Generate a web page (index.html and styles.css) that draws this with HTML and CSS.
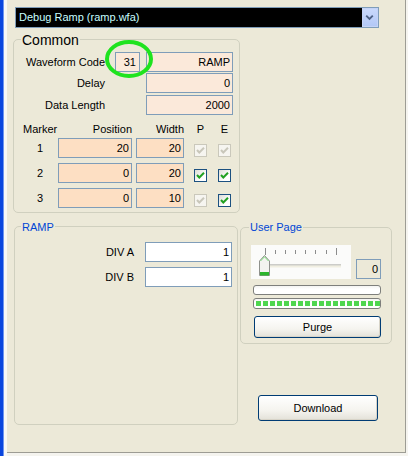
FILE: index.html
```html
<!DOCTYPE html>
<html>
<head>
<meta charset="utf-8">
<link rel="stylesheet" href="styles.css">
</head>
<body>
<div class="frame">
  <div class="edge"></div>
  <div class="panel">
    <div class="combo">
      <span class="combo-text">Debug Ramp (ramp.wfa)</span>
      <span class="combo-btn"><svg width="16" height="19" viewBox="0 0 16 19"><path d="M4.5 7.5 L8 11 L11.5 7.5" fill="none" stroke="#4d6185" stroke-width="2"/></svg></span>
    </div>

    <div class="group common">
      <span class="legend legend-big">Common</span>
      <div class="frow">
        <span class="lbl">Waveform Code</span>
        <span class="tb ro code">31</span>
        <span class="tb ro wide gap6">RAMP</span>
      </div>
      <div class="frow mt1">
        <span class="lbl">Delay</span>
        <span class="tb ro wide gap41">0</span>
      </div>
      <div class="frow mt2">
        <span class="lbl">Data Length</span>
        <span class="tb ro wide gap41">2000</span>
      </div>

      <div class="mhead">
        <span class="mnum mhd">Marker</span>
        <span class="mpos hr">Position</span>
        <span class="mwid hr">Width</span>
        <span class="mchk hc">P</span>
        <span class="mchk2 hc">E</span>
      </div>
      <div class="mrow first">
        <span class="mnum">1</span>
        <span class="tb mk mpos">20</span>
        <span class="tb mk mwid">20</span>
        <span class="cb off mchk"><svg width="13" height="13" viewBox="0 0 13 13"><path d="M3 6 L5.3 8.5 L10 3.8" fill="none" stroke="#c9c7ba" stroke-width="2"/></svg></span>
        <span class="cb off mchk2"><svg width="13" height="13" viewBox="0 0 13 13"><path d="M3 6 L5.3 8.5 L10 3.8" fill="none" stroke="#c9c7ba" stroke-width="2"/></svg></span>
      </div>
      <div class="mrow">
        <span class="mnum">2</span>
        <span class="tb mk mpos">0</span>
        <span class="tb mk mwid">20</span>
        <span class="cb on mchk"><svg width="11" height="11" viewBox="0 0 11 11"><path d="M2 5 L4.3 7.5 L9 2.8" fill="none" stroke="#21a121" stroke-width="2"/></svg></span>
        <span class="cb on mchk2"><svg width="11" height="11" viewBox="0 0 11 11"><path d="M2 5 L4.3 7.5 L9 2.8" fill="none" stroke="#21a121" stroke-width="2"/></svg></span>
      </div>
      <div class="mrow">
        <span class="mnum">3</span>
        <span class="tb mk mpos">0</span>
        <span class="tb mk mwid">10</span>
        <span class="cb off mchk"><svg width="13" height="13" viewBox="0 0 13 13"><path d="M3 6 L5.3 8.5 L10 3.8" fill="none" stroke="#c9c7ba" stroke-width="2"/></svg></span>
        <span class="cb on mchk2"><svg width="11" height="11" viewBox="0 0 11 11"><path d="M2 5 L4.3 7.5 L9 2.8" fill="none" stroke="#21a121" stroke-width="2"/></svg></span>
      </div>
    </div>

    <div class="lower">
      <div class="group ramp">
        <span class="legend legend-blue">RAMP</span>
        <div class="drow">
          <span class="dlbl">DIV A</span>
          <span class="tb wide white">1</span>
        </div>
        <div class="drow mt5">
          <span class="dlbl">DIV B</span>
          <span class="tb wide white">1</span>
        </div>
      </div>

      <div class="rightcol">
        <div class="group user">
          <span class="legend legend-blue lu">User Page</span>
          <div class="srow">
            <div class="slider">
              <svg width="100" height="34" viewBox="0 0 100 34">
                <g stroke="#8c8c8c" stroke-width="1">
                  <line x1="14.5" y1="3" x2="14.5" y2="10"/>
                  <line x1="24.5" y1="5" x2="24.5" y2="9"/>
                  <line x1="34.5" y1="5" x2="34.5" y2="9"/>
                  <line x1="44.5" y1="5" x2="44.5" y2="9"/>
                  <line x1="54.5" y1="5" x2="54.5" y2="9"/>
                  <line x1="64.5" y1="5" x2="64.5" y2="9"/>
                  <line x1="75.5" y1="5" x2="75.5" y2="9"/>
                  <line x1="85.5" y1="3" x2="85.5" y2="10"/>
                </g>
                <rect x="17" y="19.5" width="73" height="1" fill="#9d9d98"/>
                <rect x="17" y="20.5" width="73" height="2" fill="#f1efe2"/>
                <path d="M8.5 16 L13.5 10.5 L18.5 16 L18.5 30.5 L8.5 30.5 Z" fill="#f3f3ef" stroke="#8f918c" stroke-width="1"/>
                <path d="M9.5 16 L13.5 11.8 L17.5 16" fill="none" stroke="#7bd97b" stroke-width="1"/>
                <rect x="9" y="27" width="9" height="3.5" fill="#2cb52c"/>
              </svg>
            </div>
            <span class="tb val">0</span>
          </div>
          <div class="pbar p1"></div>
          <div class="pbar p2"><div class="dash"></div></div>
          <button class="btn purge">Purge</button>
        </div>
        <button class="btn download">Download</button>
      </div>
    </div>
  </div>
  <svg class="circle" width="52" height="42" viewBox="0 0 52 42"><ellipse cx="26" cy="20" rx="22" ry="17" fill="none" stroke="#1fe31f" stroke-width="4"/></svg>
</div>
</body>
</html>
```

FILE: styles.css
```css
* { box-sizing: border-box; }
html, body { margin: 0; padding: 0; }
body {
  background: #f5f4ef;
  font-family: "Liberation Sans", Arial, sans-serif;
  font-size: 11px;
  color: #000;
}
.frame {
  position: relative;
  display: flex;
  width: 408px;
  height: 456px;
  overflow: hidden;
}
.edge {
  width: 7px;
  height: 456px;
  background: linear-gradient(to right, #0a46de 0 3px, #6f95ee 3px 4px, #f8f8f6 4px 7px);
}
.panel {
  width: 399px;
  height: 453px;
  background: #ece9d8;
  border-right: 1px solid #9d9c94;
  border-bottom: 1px solid #9d9c94;
  padding: 7px 0 0 6px;
}

/* combo */
.combo {
  margin-left: 2px;
  width: 364px;
  height: 21px;
  border: 1px solid #7f9db9;
  background: #000;
  display: flex;
  align-items: center;
}
.combo-text {
  flex: 1;
  padding-left: 3px;
  color: #c8feff;
  line-height: 19px;
}
.combo-btn {
  width: 16px;
  height: 19px;
  background: linear-gradient(#c9d9fc, #b3c8f6);
  border: 1px solid #c4d3f7;
  display: flex;
}
.combo-btn svg { display: block; margin-left: -1px; margin-top: -1px; }

/* groups */
.group {
  position: relative;
  border: 1px solid #d0d0bf;
  border-radius: 5px;
}
.legend {
  position: absolute;
  background: #ece9d8;
  padding: 0 1px;
  line-height: 13px;
  white-space: nowrap;
}
.legend-big {
  font-size: 14px;
  line-height: 16px;
  top: -8px;
  left: 7px;
}
.legend-blue {
  color: #0046d5;
  top: -6px;
  left: 6px;
}
.lu { left: 8px; top: -7px; }

.common {
  margin-top: 11px;
  width: 227px;
  height: 174px;
  padding-top: 12px;
}
.frow {
  display: flex;
  height: 20px;
}
.mt1 { margin-top: 1px; }
.mt2 { margin-top: 2px; }
.mt5 { margin-top: 5px; }
.lbl {
  width: 91px;
  text-align: right;
  line-height: 20px;
  white-space: nowrap;
}
.tb {
  height: 20px;
  border: 1px solid #7f9db9;
  text-align: right;
  padding-right: 2px;
  line-height: 18px;
  white-space: nowrap;
}
.ro { background: #fbe9da; }
.mk { background: #fddfc3; }
.white { background: #fff; }
.code { width: 25px; margin-left: 10px; padding-right: 3px; }
.wide { width: 87px; }
.gap6 { margin-left: 6px; }
.gap41 { margin-left: 41px; }

/* markers */
.mhead {
  display: flex;
  height: 13px;
  margin-top: 8px;
  line-height: 13px;
}
.mrow {
  display: flex;
  height: 20px;
  margin-top: 5px;
  align-items: flex-end;
}
.mrow.first { margin-top: 2px; }
.mnum {
  width: 44px;
  padding-left: 23px;
  line-height: 20px;
  align-self: stretch;
}
.mhd { padding-left: 9px; line-height: 13px; }
.mpos { width: 74px; }
.mwid { width: 48px; margin-left: 4px; }
.mchk { width: 13px; margin-left: 10px; }
.mchk2 { width: 13px; margin-left: 11px; }
.hr { text-align: right; }
.hc { text-align: center; }
.cb {
  height: 13px;
  margin-bottom: 1px;
  display: flex;
  align-items: center;
  justify-content: center;
}
.cb svg { display: block; }
.cb.off { border: none; }
.cb.off svg { outline: 1px solid #cac8bb; outline-offset: -1px; background: #f6f5f0; }
.cb.on {
  border: 1px solid #1c5180;
  background: linear-gradient(135deg, #dcdcd6, #fff 70%);
}

/* lower */
.lower {
  display: flex;
  align-items: flex-start;
  margin-top: 13px;
}
.ramp {
  margin-left: 1px;
  width: 224px;
  height: 199px;
  padding-top: 15px;
}
.drow { display: flex; height: 20px; }
.dlbl {
  width: 119px;
  text-align: right;
  line-height: 20px;
  margin-right: 11px;
}
.rightcol {
  margin-left: 2px;
  width: 152px;
}
.user {
  margin-top: 1px;
  width: 152px;
  height: 117px;
  padding-top: 17px;
}
.srow {
  display: flex;
  align-items: flex-end;
  margin-left: 10px;
}
.slider {
  width: 100px;
  height: 34px;
  background: #fbfbfa;
}
.slider svg { display: block; }
.val {
  width: 25px;
  margin-left: 5px;
  background: #ece9d8;
}
.pbar {
  margin-left: 12px;
  width: 128px;
  border: 1px solid #7e7f7c;
  border-radius: 3px;
  background: linear-gradient(#f4f4f2, #fff 40%, #fff);
}
.p1 { height: 10px; margin-top: 6px; }
.p2 { height: 11px; margin-top: 3px; padding: 2px 0 0 2px; }
.dash {
  height: 5px;
  width: 124px;
  background: repeating-linear-gradient(to right, #4fd64f 0 5px, transparent 5px 7px);
}
.btn {
  display: block;
  font-family: "Liberation Sans", Arial, sans-serif;
  font-size: 11px;
  color: #000;
  border: 1px solid #003c74;
  border-radius: 3px;
  background: linear-gradient(#ffffff, #f5f4ef 60%, #e3e1d8);
  box-shadow: inset -1px -1px 0 #d8d4c8;
  padding: 0;
}
.purge {
  margin: 7px 0 0 13px;
  width: 127px;
  height: 22px;
}
.download {
  margin: 51px 0 0 18px;
  width: 120px;
  height: 26px;
}

/* annotation */
.circle {
  position: absolute;
  left: 103px;
  top: 39px;
}
```
